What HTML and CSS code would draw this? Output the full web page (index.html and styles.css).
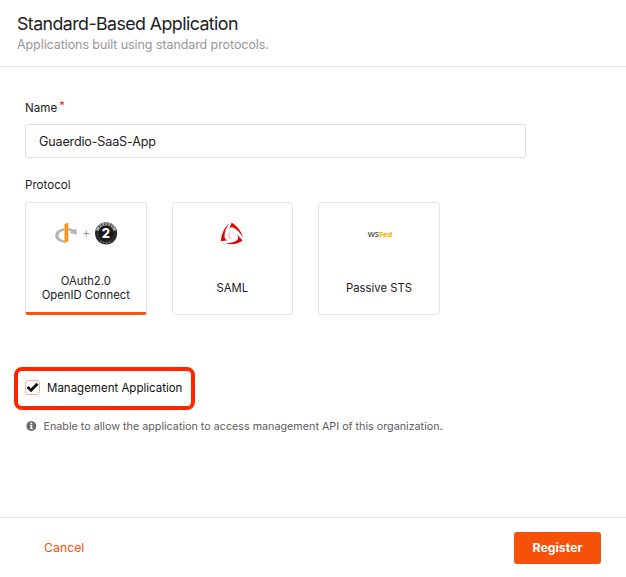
FILE: index.html
```html
<!DOCTYPE html>
<html lang="en">
<head>
<meta charset="utf-8">
<title>Standard-Based Application</title>
<link rel="stylesheet" href="styles.css">
</head>
<body>
<div class="modal">
  <header class="header">
    <h1 class="title">Standard-Based Application</h1>
    <p class="subtitle">Applications built using standard protocols.</p>
  </header>
  <main class="content">
    <div class="label">Name<span class="required">*</span></div>
    <div class="input">Guaerdio-SaaS-App</div>
    <div class="label label-protocol">Protocol</div>
    <div class="cards">
      <div class="card selected">
        <div class="logo">
          <svg width="64" height="24" viewBox="0 0 64 24">
            <path d="M10.5 6.2C4.8 6.9 1.2 9.9 1.2 13.4c0 3.9 4.2 6.8 9.3 7.2v-2.2c-3.6-.6-6-2.4-6-5 0-2.4 2.4-4.2 6-5z" fill="#b3b3b3"/>
            <path d="M14.3 6.2c2.2.2 4.1.8 5.6 1.7l2.2-1.4.9 6-7.3-1.6 1.8-1.1c-1-.6-2-1-3.2-1.3z" fill="#b3b3b3"/>
            <path d="M10.5 2l3.8-1.2v18.5l-3.8 2z" fill="#f7931e"/>
            <path d="M29.3 11.5h6M32.3 8.5v6" stroke="#999" stroke-width="1" fill="none"/>
            <circle cx="52.1" cy="11.3" r="11.1" fill="#2b2b2b"/>
            <path d="M43.2 8.4a9.4 9.4 0 0 1 17.8 0" fill="none" stroke="#aaa" stroke-width="3"/>
            <path d="M44.9 5.3a9.5 9.5 0 0 1 14.4 0" fill="none" stroke="#444" stroke-width="1.8" stroke-dasharray="1.5 1.5"/>
            <path d="M46.3 18.9a9.5 9.5 0 0 0 11.6 0" fill="none" stroke="#888" stroke-width="1.3" stroke-dasharray="1.5 1.5"/>
            <circle cx="52.1" cy="11.3" r="7.6" fill="#191919"/>
            <text x="51.9" y="16" text-anchor="middle" class="two">2</text>
          </svg>
        </div>
        <div class="caption">OAuth2.0<br>OpenID Connect</div>
      </div>
      <div class="card">
        <div class="logo">
          <svg width="24" height="24" viewBox="0 0 24 24" fill="#e60000">
            <path d="M9.3 6.4L11.6.8c4.8 2.5 9.4 8 11.7 15C20.2 10.8 17 7.4 13.4 5.7c-1.6-.7-2.9-.4-4.1.7z"/>
            <path d="M9.4 1.2C5 4.4 1.2 12 .9 19.2l7-.9C5.6 17.6 4.6 16.4 4.5 14.4 4.4 10 6.3 5.2 9.4 1.2z"/>
            <path d="M17 12.4l5.6 6.2c-4.6 3.7-11.4 4.6-17.6 2.6 5 .2 8.8-.8 11.6-2.7 1.9-1.4 1.9-3.4.4-6.1z"/>
            <path d="M8.2 12.7c.4-2 1.8-3.4 3.4-4-1.8 1.6-2.5 3.4-2.3 5.4.3 1.6 1.5 2.6 3.5 3-2.8.2-5-1.6-4.6-4.4z" opacity=".35"/>
          </svg>
        </div>
        <div class="caption">SAML</div>
      </div>
      <div class="card">
        <div class="logo wsfed"><span class="ws">WS</span><span class="fed">Fed</span></div>
        <div class="caption">Passive STS</div>
      </div>
    </div>
    <div class="highlight">
      <span class="checkbox">
        <svg width="13" height="13" viewBox="0 0 13 13"><path d="M1.6 6L5 9.2 11.5 2.8" fill="none" stroke="#111" stroke-width="2.8"/></svg>
      </span>
      <span class="check-label">Management Application</span>
    </div>
    <div class="hint">
      <svg width="11" height="10" viewBox="0 0 11 10"><circle cx="5.3" cy="5" r="5" fill="#6c6c6c"/><path d="M4.5 1.6h1.7v1.6H4.5zM4 4.1h2.2v3h.6v1H4v-1h.6v-2H4z" fill="#fff"/></svg>
      <span class="hint-text">Enable to allow the application to access management API of this organization.</span>
    </div>
  </main>
  <footer class="footer">
    <span class="cancel">Cancel</span>
    <span class="register">Register</span>
  </footer>
</div>
</body>
</html>
```
FILE: styles.css
```css
* { box-sizing: border-box; }
body {
  margin: 0;
  background: #fff;
  color: #212121;
  font-family: Inter, "Liberation Sans", sans-serif;
}
.modal {
  display: flex;
  flex-direction: column;
  height: 577px;
  overflow: hidden;
}
.header {
  height: 67px;
  padding: 12px 17px 0;
  border-bottom: 1px solid #dedede;
}
.title {
  margin: 0;
  font-size: 17.8px;
  font-weight: 400;
  line-height: 24px;
  letter-spacing: -0.57px;
}
.subtitle {
  margin: 0;
  font-size: 12.5px;
  line-height: 18px;
  letter-spacing: -0.08px;
  color: #969696;
}
.content {
  flex: 1;
  padding: 33px 25px 0;
}
.label {
  height: 16px;
  font-size: 11.6px;
  line-height: 16px;
}
.required {
  position: relative;
  top: -3px;
  margin-left: 2px;
  color: #e02020;
  font-size: 11px;
}
.input {
  width: 501px;
  height: 34px;
  margin-top: 8px;
  padding: 0 13px;
  border: 1px solid #dededf;
  border-radius: 3px;
  font-size: 12.6px;
  line-height: 33px;
  letter-spacing: -0.17px;
}
.label-protocol { margin-top: 19px; }
.cards {
  display: flex;
  gap: 25px;
  margin-top: 9px;
}
.card {
  width: 121.6px;
  height: 113px;
  border: 1px solid #e4e4e4;
  border-radius: 3px;
  display: flex;
  flex-direction: column;
  align-items: center;
}
.selected { border-bottom: 3px solid #f9530b; }
.logo {
  display: flex;
  height: 24px;
  margin-top: 19px;
}
.two {
  font: 800 13px Inter, sans-serif;
  fill: #fff;
}
.wsfed {
  align-items: center;
  padding-left: 2px;
  font-family: "Open Sans", sans-serif;
  font-size: 7.6px;
  line-height: 8px;
  letter-spacing: -0.1px;
}
.ws { color: #444; font-weight: 600; }
.fed { color: #fbb814; font-weight: 800; }
.caption {
  display: flex;
  align-items: center;
  height: 28px;
  margin-top: 28px;
  font-size: 11.3px;
  line-height: 14px;
  text-align: center;
}
.highlight {
  display: flex;
  align-items: center;
  width: 181px;
  height: 43px;
  margin: 52px 0 0 -11px;
  padding: 0 0 2px 7px;
  border: 4px solid #ff2600;
  border-radius: 8px;
}
.checkbox {
  width: 15px;
  height: 15px;
  border: 1px solid #fbb08d;
  border-radius: 3px;
  display: flex;
}
.check-label {
  margin-left: 7px;
  font-size: 11.5px;
  line-height: 16px;
  color: #111;
  white-space: nowrap;
}
.hint {
  display: flex;
  align-items: center;
  margin: 8px 0 0 1px;
  height: 16px;
}
.hint-text {
  position: relative;
  top: 1px;
  margin-left: 6.5px;
  font-size: 10.75px;
  line-height: 16px;
  color: #5c5c5c;
  white-space: nowrap;
}
.footer {
  display: flex;
  justify-content: space-between;
  height: 60px;
  padding: 14px 25px 0 44px;
  border-top: 1px solid #dedede;
}
.cancel, .register {
  height: 32px;
  font-size: 12.3px;
  line-height: 31px;
}
.cancel { color: #f9530b; }
.register {
  width: 87px;
  border-radius: 3px;
  background: #f65108;
  color: #fff;
  font-weight: 700;
  text-align: center;
}
```
